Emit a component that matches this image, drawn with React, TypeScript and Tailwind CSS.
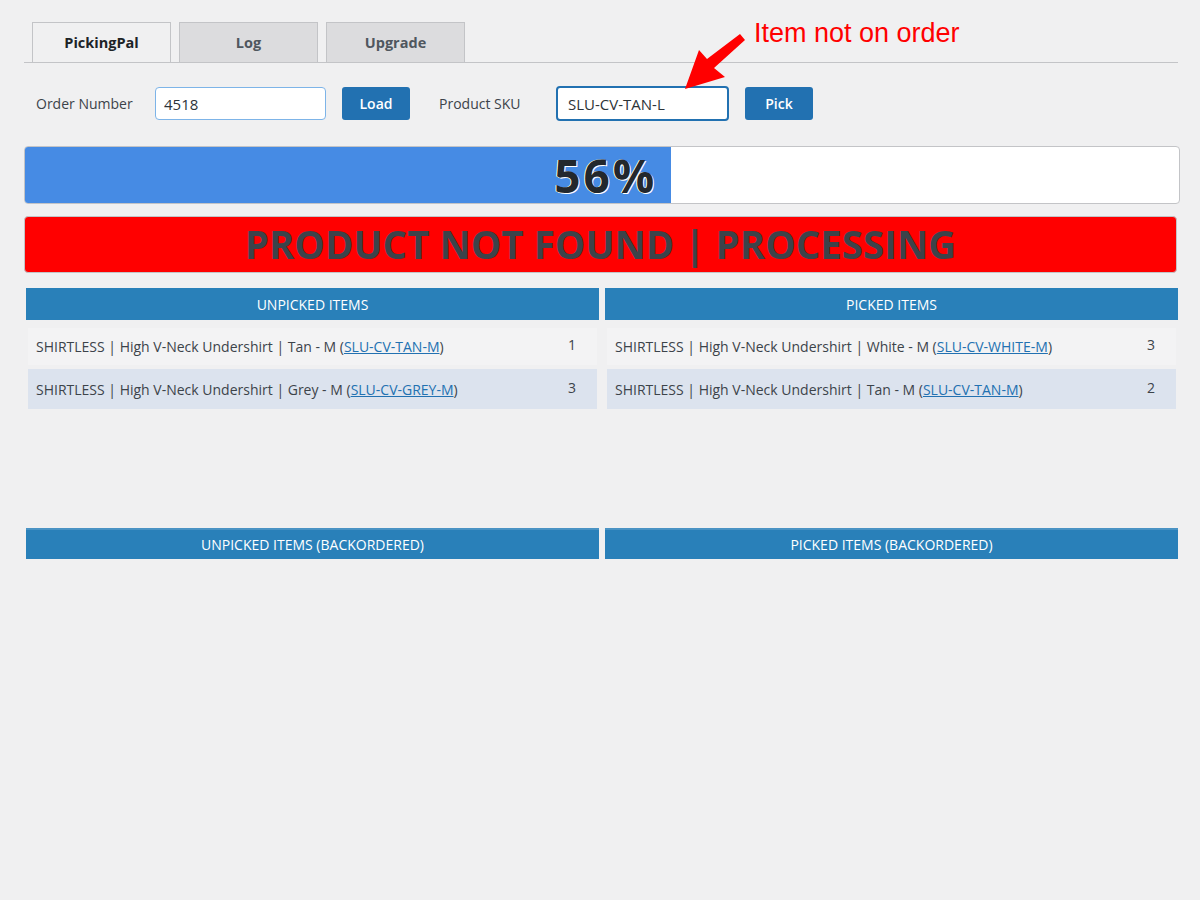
import React from 'react';

interface Item {
    name: string;
    sku: string;
    qty: number;
}

const unpicked: Item[] = [
    { name: 'SHIRTLESS | High V-Neck Undershirt | Tan - M', sku: 'SLU-CV-TAN-M', qty: 1 },
    { name: 'SHIRTLESS | High V-Neck Undershirt | Grey - M', sku: 'SLU-CV-GREY-M', qty: 3 },
];

const picked: Item[] = [
    { name: 'SHIRTLESS | High V-Neck Undershirt | White - M', sku: 'SLU-CV-WHITE-M', qty: 3 },
    { name: 'SHIRTLESS | High V-Neck Undershirt | Tan - M', sku: 'SLU-CV-TAN-M', qty: 2 },
];

const font = { fontFamily: '"Open Sans", "Noto Sans", sans-serif' };

const Tab: React.FC<{ label: string; active?: boolean }> = ({ label, active }) => (
    <div
        className={
            active
                ? 'w-[139px] h-10 -mb-px flex items-center justify-center border border-b-0 border-[#c3c4c7] bg-[#f0f0f1] text-[14.5px] font-bold text-[#1d2327]'
                : 'w-[139px] h-10 flex items-center justify-center border border-b-0 border-[#c3c4c7] bg-[#dcdcde] text-[14.5px] font-bold text-[#50575e]'
        }
    >
        {label}
    </div>
);

// One column of the pick list: blue header plus its rows
const ItemTable: React.FC<{ title: string; items: Item[] }> = ({ title, items }) => (
    <div>
        <div className="h-8 flex items-center justify-center bg-[#2980b9] text-white text-[14px] uppercase">
            {title}
        </div>
        {items.length > 0 && (
            <div className="mt-2 flex flex-col gap-[4px] px-[2px]">
                {items.map((item, i) => (
                    <div
                        key={item.sku + i}
                        className={
                            i % 2 === 0
                                ? 'h-[37px] flex items-center pl-2 bg-[#f3f3f4] text-[14px] text-[#3c434a]'
                                : 'h-[40px] flex items-center pl-2 bg-[#dce3ee] text-[14px] text-[#3c434a]'
                        }
                    >
                        <span className="flex-1">
                            {item.name} (
                            <a href="#" className="text-[#2271b1] underline">
                                {item.sku}
                            </a>
                            )
                        </span>
                        <span className="w-[50px] text-center -mt-1">{item.qty}</span>
                    </div>
                ))}
            </div>
        )}
    </div>
);

export default function App() {
    const percent = 56;

    return (
        <div className="relative min-h-[900px] bg-[#f0f0f1] pl-6 pr-5 pt-[22px]" style={font}>
            {/* Tabs */}
            <div className="flex gap-2 pl-2 border-b border-[#c3c4c7] mr-[2px]">
                <Tab label="PickingPal" active />
                <Tab label="Log" />
                <Tab label="Upgrade" />
            </div>

            {/* Order / SKU form */}
            <div className="flex items-center mt-[23px] text-[14px] text-[#3c434a]">
                <span className="w-[131px] pl-3">Order Number</span>
                <input
                    defaultValue="4518"
                    className="w-[171px] h-[33px] px-2 rounded border border-[#7db4e8] bg-white text-[15px] text-[#2c3338] outline-none"
                />
                <button className="ml-4 w-[68px] h-[33px] rounded-[3px] bg-[#2271b1] text-white text-[14px] font-semibold">
                    Load
                </button>
                <span className="ml-[29px] w-[117px]">Product SKU</span>
                <input
                    defaultValue="SLU-CV-TAN-L"
                    className="w-[173px] h-[35px] px-[10px] rounded border-2 border-[#2271b1] bg-white text-[15px] text-[#2c3338] outline-none"
                />
                <button className="ml-4 w-[68px] h-[33px] rounded-[3px] bg-[#2271b1] text-white text-[14px] font-semibold">
                    Pick
                </button>
            </div>

            {/* Progress */}
            <div className="mt-[25px] h-[58px] flex rounded border border-[#c3c4c7] bg-white">
                <div
                    className="h-full flex items-center justify-end pr-[14px] rounded-l-[3px] bg-[#468be4] text-[46px] leading-none font-bold tracking-[3px] text-[#23282d] [text-shadow:1px_1px_0_#fff,-1px_0_0_#fff]"
                    style={{ width: `${percent}%` }}
                >
                    <span>{percent}%</span>
                </div>
            </div>

            {/* Status banner */}
            <div className="mt-3 h-[57px] flex items-center justify-center rounded border border-[#c3c4c7] bg-[#ff0000] text-[38.5px] leading-none font-bold text-[#3c434a] mr-[3px]">
                PRODUCT NOT FOUND | PROCESSING
            </div>

            {/* Items */}
            <div className="mt-[15px] grid grid-cols-2 gap-[6px] px-[2px] min-h-[240px]">
                <ItemTable title="Unpicked Items" items={unpicked} />
                <ItemTable title="Picked Items" items={picked} />
            </div>

            <div className="grid grid-cols-2 gap-[6px] px-[2px]">
                <div className="h-[31px] flex items-center justify-center bg-[#2980b9] border-t-2 border-[#4a93c4] text-white text-[14px] uppercase">
                    Unpicked Items (Backordered)
                </div>
                <div className="h-[31px] flex items-center justify-center bg-[#2980b9] border-t-2 border-[#4a93c4] text-white text-[14px] uppercase">
                    Picked Items (Backordered)
                </div>
            </div>

            {/* Annotation overlay */}
            <svg className="absolute left-0 top-0 pointer-events-none" width="1200" height="120">
                <polygon
                    points="685,89 699,50 707,59 740,34 745,40 714,68 725,77"
                    fill="#ff0000"
                />
            </svg>
            <div
                className="absolute left-[754px] top-[20px] text-[27px] text-[#ff0000] leading-none"
                style={{ fontFamily: '"Liberation Sans", Arial, sans-serif' }}
            >
                Item not on order
            </div>
        </div>
    );
}
